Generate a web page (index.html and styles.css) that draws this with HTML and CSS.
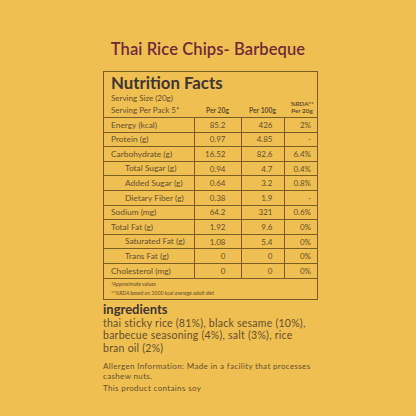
FILE: index.html
```html
<html>
<head>
	<meta charset="UTF-8">
	<title>Thai Rice Chips- Barbeque</title>
	<link rel="stylesheet" href="styles.css">
</head>
<body>
	<div class="page">
		<h1 class="title">Thai Rice Chips- Barbeque</h1>
		<table class="facts">
			<tr class="head">
				<th class="label">
					<div class="big">Nutrition Facts</div>
					<div class="serv">Serving Size (20g)</div>
					<div class="serv">Serving Per Pack 5*</div>
				</th>
				<th>Per 20g</th>
				<th>Per 100g</th>
				<th class="rda">%RDA**<br>Per 20g</th>
			</tr>
			<tr><td>Energy (kcal)</td><td>85.2</td><td>426</td><td>2%</td></tr>
			<tr><td>Protein (g)</td><td>0.97</td><td>4.85</td><td>-</td></tr>
			<tr><td>Carbohydrate (g)</td><td>16.52</td><td>82.6</td><td>6.4%</td></tr>
			<tr><td class="sub">Total Sugar (g)</td><td>0.94</td><td>4.7</td><td>0.4%</td></tr>
			<tr><td class="sub">Added Sugar (g)</td><td>0.64</td><td>3.2</td><td>0.8%</td></tr>
			<tr><td class="sub">Dietary Fiber (g)</td><td>0.38</td><td>1.9</td><td>-</td></tr>
			<tr><td>Sodium (mg)</td><td>64.2</td><td>321</td><td>0.6%</td></tr>
			<tr><td>Total Fat (g)</td><td>1.92</td><td>9.6</td><td>0%</td></tr>
			<tr><td class="sub">Saturated Fat (g)</td><td>1.08</td><td>5.4</td><td>0%</td></tr>
			<tr><td class="sub">Trans Fat (g)</td><td>0</td><td>0</td><td>0%</td></tr>
			<tr><td>Cholesterol (mg)</td><td>0</td><td>0</td><td>0%</td></tr>
			<tr class="notes">
				<td colspan="4">
					<div>*Approximate values</div>
					<div>**%RDA based on 2000 kcal average adult diet</div>
				</td>
			</tr>
		</table>
		<h2 class="ing-title">ingredients</h2>
		<p class="ing">thai sticky rice (81%), black sesame (10%), barbecue seasoning (4%), salt (3%), rice bran oil (2%)</p>
		<p class="allergen first">Allergen Information: Made in a facility that processes cashew nuts.</p>
		<p class="allergen">This product contains soy</p>
	</div>
</body>
</html>
```

FILE: styles.css
```css
*{
	margin: 0;
	padding: 0;
}
body {
	background: #efbf52;
	font-family: Lato, "Noto Sans", sans-serif;
	color: #634f2e;
}
.page {
	width: 210px;
	margin: 0 auto;
	padding-top: 39px;
}
.title {
	text-align: center;
	font-size: 16.5px;
	font-weight: 600;
	color: #6e2a3a;
	white-space: nowrap;
	margin: 0 -20px 12px;
	line-height: 20px;
	letter-spacing: 0.1px;
}
.facts {
	width: 210px;
	border-collapse: collapse;
	border: 1px solid #7a5e28;
	table-layout: fixed;
}
.facts td {
	height: 14.6px;
	font-size: 8px;
	border-top: 1px solid #7a5e28;
	border-left: 1px solid #7a5e28;
	text-align: right;
	padding: 0 15px 0 0;
	line-height: 1;
}
.facts td:first-child {
	border-left: none;
	text-align: left;
	padding: 0 0 0 7px;
	font-size: 8.4px;
}
.facts td:nth-child(3) {
	padding-right: 11px;
}
.facts td:nth-child(4) {
	padding-right: 6px;
}
.facts td.sub {
	padding-left: 21px;
}
.head th {
	font-size: 6.8px;
	font-weight: 700;
	vertical-align: bottom;
	text-align: center;
	padding: 0 0 3px;
	color: #634f2e;
	line-height: 1;
}
.head th.label {
	width: 83px;
	text-align: left;
	font-weight: 400;
	padding: 1.5px 0 1.5px 7px;
	white-space: nowrap;
}
.head th:nth-child(2) {
	width: 47px;
}
.head th:nth-child(3) {
	width: 43px;
}
.head th.rda {
	width: 30px;
	padding-left: 3px;
	padding-bottom: 3px;
	font-size: 6.3px;
	line-height: 1;
}
.big {
	font-size: 16.8px;
	font-weight: 700;
	color: #3d3433;
	line-height: 18px;
}
.serv {
	font-size: 8px;
	line-height: 12px;
}
.facts .notes td {
	height: 20px;
	font-size: 5.3px;
	font-style: italic;
	line-height: 9px;
	padding: 1px 0 1px 7px;
}
.ing-title {
	font-size: 13px;
	font-weight: 700;
	color: #3d3433;
	margin-top: 1px;
	line-height: 16px;
}
.ing {
	font-size: 10.5px;
	line-height: 12.8px;
	letter-spacing: 0.25px;
}
.allergen {
	font-size: 8px;
	line-height: 10.5px;
	letter-spacing: 0.35px;
	margin-top: 1.5px;
}
.allergen.first {
	margin-top: 6px;
}
```
